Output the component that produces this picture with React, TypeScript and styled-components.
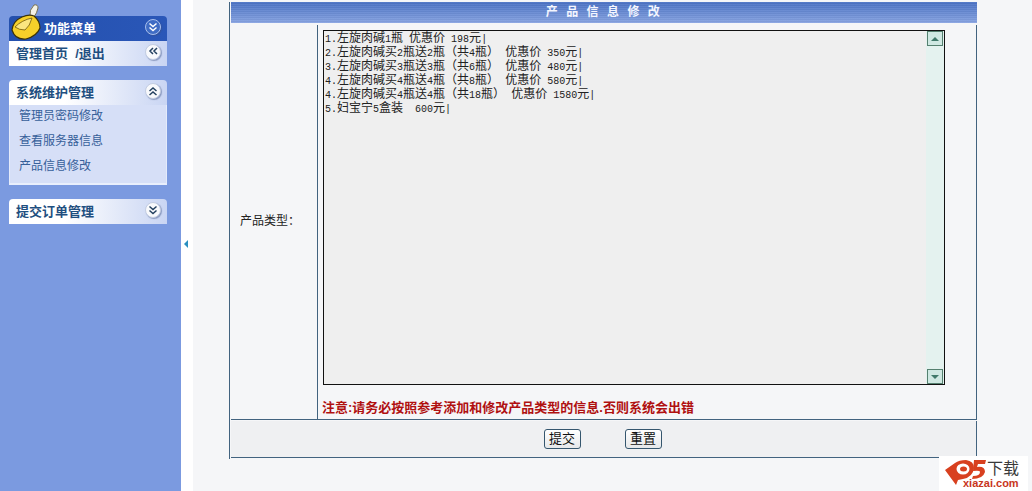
import React from "react";
import styled, { createGlobalStyle } from "styled-components";

const Global = createGlobalStyle`
  html, body { margin: 0; padding: 0; height: 100%; overflow: hidden; }
  body { background: #f5f6f8; font-family: "Liberation Sans", "Noto Sans CJK SC", sans-serif; font-size: 12px; }
`;

const Page = styled.div`
  display: grid;
  grid-template-columns: 181px 12px 1fr;
  width: 1032px;
  height: 491px;
  position: relative;
  overflow: hidden;
`;

const Sidebar = styled.aside`
  background: #7b9ae0;
  padding: 16px 14px 0 9px;
  box-sizing: border-box;
  position: relative;
`;

const Group = styled.section`
  margin-bottom: 14px;
`;

const GroupHead = styled.div<{ $dark?: boolean; $round?: boolean }>`
  height: 25px;
  display: flex;
  align-items: center;
  justify-content: space-between;
  box-sizing: border-box;
  padding: 0 6px 3px ${(p) => (p.$dark ? "35px" : "7px")};
  font-size: 13px;
  font-weight: 700;
  border-radius: ${(p) => (p.$round ? "4px 4px 0 0" : "0")};
  color: ${(p) => (p.$dark ? "#ffffff" : "#1f4f80")};
  background: ${(p) =>
    p.$dark
      ? "linear-gradient(90deg,#2450ad,#2a57b8)"
      : "linear-gradient(90deg,#ffffff 0%,#ffffff 35%,#c9d5f3 100%)"};
`;

const DarkHead = styled(GroupHead)`
  border-radius: 4px 4px 0 0;
`;

const Toggle = styled.span<{ $dark?: boolean }>`
  width: 14px;
  height: 14px;
  border-radius: 50%;
  background: ${(p) => (p.$dark ? "#3f6cc4" : "#f8f9fc")};
  border: 1px solid ${(p) => (p.$dark ? "#a9c0ee" : "#c3cde2")};
  box-shadow: 1px 1px 1px rgba(60, 80, 130, 0.45);
  display: flex;
  align-items: center;
  justify-content: center;
`;

const GroupBody = styled.div`
  background: #d6dff7;
  height: 80px;
  box-sizing: border-box;
  border: 1px solid #e4ebfb;
  border-top: 0;
  border-bottom: 2px solid #e9effc;
  padding: 1px 0 0 9px;
`;

const MenuItem = styled.div`
  height: 25px;
  line-height: 21px;
  color: #36609a;
  font-size: 12px;
`;

const Logo = styled.svg`
  position: absolute;
  left: 10px;
  top: 3px;
`;

const Gutter = styled.div`
  background: #ffffff;
  display: flex;
  align-items: center;
  padding: 0 0 4px 3px;
  box-sizing: border-box;
`;

const Handle = styled.span`
  width: 0;
  height: 0;
  border-top: 4px solid transparent;
  border-bottom: 4px solid transparent;
  border-right: 4px solid #2a8fc0;
`;

const Main = styled.main`
  background: #f5f6f8;
  padding: 2px 0 0 36px;
`;

const Panel = styled.div`
  width: 748px;
  height: 457px;
  box-sizing: border-box;
  border-left: 1px solid #42637f;
  display: flex;
  flex-direction: column;
`;

const TitleBar = styled.div`
  height: 21px;
  margin-left: 1px;
  flex: none;
  box-sizing: border-box;
  padding-left: 6px;
  text-align: center;
  font-size: 12px;
  font-weight: 700;
  letter-spacing: 8.4px;
  line-height: 20px;
  color: #f4f6ff;
  background: repeating-linear-gradient(0deg, rgba(255,255,255,0.05) 0 1px, rgba(0,0,0,0.03) 1px 2px),
    linear-gradient(180deg, #4a72c4 0%, #88a4e2 100%);
`;

const FormRow = styled.div`
  margin: 2px 0 0 1px;
  height: 394px;
  flex: none;
  display: grid;
  grid-template-columns: 87px 1fr;
  border-right: 1px solid #42637f;
  border-bottom: 1px solid #42637f;
`;

const LabelCell = styled.div`
  border-right: 1px solid #42637f;
  display: flex;
  align-items: center;
  padding: 0 0 6px 9px;
  color: #222;
  font-size: 12px;
`;

const FieldCell = styled.div`
  padding: 5px 0 0 5px;
`;

const TextBox = styled.div`
  width: 622px;
  height: 355px;
  box-sizing: border-box;
  border: 1px solid #111;
  background: #efefef;
  display: flex;
`;

const Lines = styled.div`
  flex: 1;
  padding-left: 1px;
  font-size: 12px;
  line-height: 14px;
  color: #222;
  white-space: pre;
`;

const Line = styled.div`
  height: 14px;
`;

const Ascii = styled.span`
  font-family: "Liberation Mono", monospace;
  font-size: 10px;
`;

const ScrollBar = styled.div`
  width: 18px;
  background: #e4f2ef;
  display: flex;
  flex-direction: column;
  justify-content: space-between;
  padding: 0 1px;
  box-sizing: border-box;
`;

const ScrollBtn = styled.span<{ $down?: boolean }>`
  width: 16px;
  height: 15px;
  box-sizing: border-box;
  border: 1px solid #55806f;
  background: #cfe8e2;
  display: flex;
  align-items: center;
  justify-content: center;
  &::after {
    content: "";
    border-left: 4px solid transparent;
    border-right: 4px solid transparent;
    ${(p) => (p.$down ? "border-top: 4px solid #40796a;" : "border-bottom: 4px solid #40796a;")}
  }
`;

const Note = styled.div`
  margin: 12px 0 0 -1px;
  font-size: 13px;
  font-weight: 700;
  color: #b01010;
`;

const Footer = styled.div`
  flex: 1;
  margin: 1px 0 1px 1px;
  background: #eff0f2;
  border-right: 1px solid #42637f;
  border-bottom: 1px solid #42637f;
  display: flex;
  justify-content: center;
  align-items: flex-start;
  gap: 44px;
  padding: 8px 2px 0 0;
`;

const Button = styled.button`
  width: 37px;
  height: 20px;
  padding: 0;
  box-sizing: border-box;
  border: 1px solid #35566e;
  border-radius: 3px;
  background: linear-gradient(180deg, #ffffff, #e6e8ea);
  font-family: "Liberation Sans", "Noto Sans CJK SC", sans-serif;
  font-size: 13px;
  line-height: 16px;
  color: #111;
`;

const Watermark = styled.div`
  position: absolute;
  left: 939px;
  top: 456px;
  width: 89px;
  height: 35px;
  background: #ffffff;
`;

const BrandCn = styled.span`
  position: absolute;
  left: 48px;
  top: 5px;
  font-size: 16px;
  line-height: 16px;
  color: #3a3a3a;
`;

const BrandUrl = styled.span`
  position: absolute;
  left: 24px;
  top: 22px;
  font-size: 11px;
  line-height: 11px;
  font-weight: 700;
  color: #c8361c;
`;

const Chevrons = ({ dir, color }: { dir: "up" | "down" | "left"; color: string }) => {
  const d =
    dir === "left"
      ? "M5 1 L2 4 L5 7 M9 1 L6 4 L9 7"
      : dir === "up"
      ? "M1.5 5 L5 2 L8.5 5 M1.5 9 L5 6 L8.5 9"
      : "M1.5 1.5 L5 4.5 L8.5 1.5 M1.5 5.5 L5 8.5 L8.5 5.5";
  return (
    <svg width="10" height="10" viewBox="0 0 10 10" fill="none" stroke={color} strokeWidth="1.5">
      <path d={d} />
    </svg>
  );
};

const lines = [
  "1.左旋肉碱1瓶 优惠价 198元|",
  "2.左旋肉碱买2瓶送2瓶（共4瓶） 优惠价 350元|",
  "3.左旋肉碱买3瓶送3瓶（共6瓶） 优惠价 480元|",
  "4.左旋肉碱买4瓶送4瓶（共8瓶） 优惠价 580元|",
  "4.左旋肉碱买4瓶送4瓶（共18瓶） 优惠价 1580元|",
  "5.妇宝宁5盒装  600元|",
];

const renderLine = (text: string) =>
  text.split(/([\x20-\x7e]+)/).map((part, i) =>
    /^[\x20-\x7e]+$/.test(part) ? <Ascii key={i}>{part}</Ascii> : part
  );

export default function App() {
  return (
    <Page>
      <Global />
      <Sidebar>
        <Logo width="32" height="38" viewBox="0 0 32 38">
          <path d="M20 13 Q19 7 24 2 Q28 1 28 5 Q27 10 24 14 Z" fill="#f4f2e6" stroke="#77714f" strokeWidth="1" />
          <path d="M2 27 Q3 18 12 14 Q19 11 24 13 Q30 18 30 25 Q27 33 16 36 Q5 37 2 27 Z" fill="#f6d02a" stroke="#3c3208" strokeWidth="1.2" />
          <path d="M5 24 Q12 17 22 15 Q20 23 15 27 Q9 27 5 24 Z" fill="#fbe680" stroke="#6e5708" strokeWidth="0.8" />
        </Logo>
        <Group>
          <DarkHead $dark>
            功能菜单
            <Toggle $dark>
              <Chevrons dir="down" color="#ffffff" />
            </Toggle>
          </DarkHead>
          <GroupHead>
            管理首页 &nbsp;/退出
            <Toggle>
              <Chevrons dir="left" color="#23405f" />
            </Toggle>
          </GroupHead>
        </Group>
        <Group>
          <GroupHead $round>
            系统维护管理
            <Toggle>
              <Chevrons dir="up" color="#23405f" />
            </Toggle>
          </GroupHead>
          <GroupBody>
            <MenuItem>管理员密码修改</MenuItem>
            <MenuItem>查看服务器信息</MenuItem>
            <MenuItem>产品信息修改</MenuItem>
          </GroupBody>
        </Group>
        <Group>
          <GroupHead $round>
            提交订单管理
            <Toggle>
              <Chevrons dir="down" color="#23405f" />
            </Toggle>
          </GroupHead>
        </Group>
      </Sidebar>
      <Gutter>
        <Handle />
      </Gutter>
      <Main>
        <Panel>
          <TitleBar>产品信息修改</TitleBar>
          <FormRow>
            <LabelCell>产品类型：</LabelCell>
            <FieldCell>
              <TextBox>
                <Lines>
                  {lines.map((l, i) => (
                    <Line key={i}>{renderLine(l)}</Line>
                  ))}
                </Lines>
                <ScrollBar>
                  <ScrollBtn />
                  <ScrollBtn $down />
                </ScrollBar>
              </TextBox>
              <Note>注意:请务必按照参考添加和修改产品类型的信息.否则系统会出错</Note>
            </FieldCell>
          </FormRow>
          <Footer>
            <Button>提交</Button>
            <Button>重置</Button>
          </Footer>
        </Panel>
      </Main>
      <Watermark>
        <svg width="48" height="35" viewBox="0 0 48 35">
          <path d="M6 14 L16 7 Q20 4 27 4 Q35 5 35 12 Q34 21 24 23 L19 24 L17 29 Z" fill="#d8401f" />
          <ellipse cx="24" cy="13" rx="6.5" ry="5.5" fill="#ffffff" />
          <ellipse cx="24.5" cy="13" rx="3.5" ry="2.5" fill="#d8401f" />
          <path d="M35 4 H47 L46 8 H39 L38 11 Q46 10 46 16 Q44 23 33 23 L34 20 Q41 20 41 16 Q41 14 34 15 Z" fill="#d8401f" />
        </svg>
        <BrandCn>下载</BrandCn>
        <BrandUrl>xiazai.com</BrandUrl>
      </Watermark>
    </Page>
  );
}
